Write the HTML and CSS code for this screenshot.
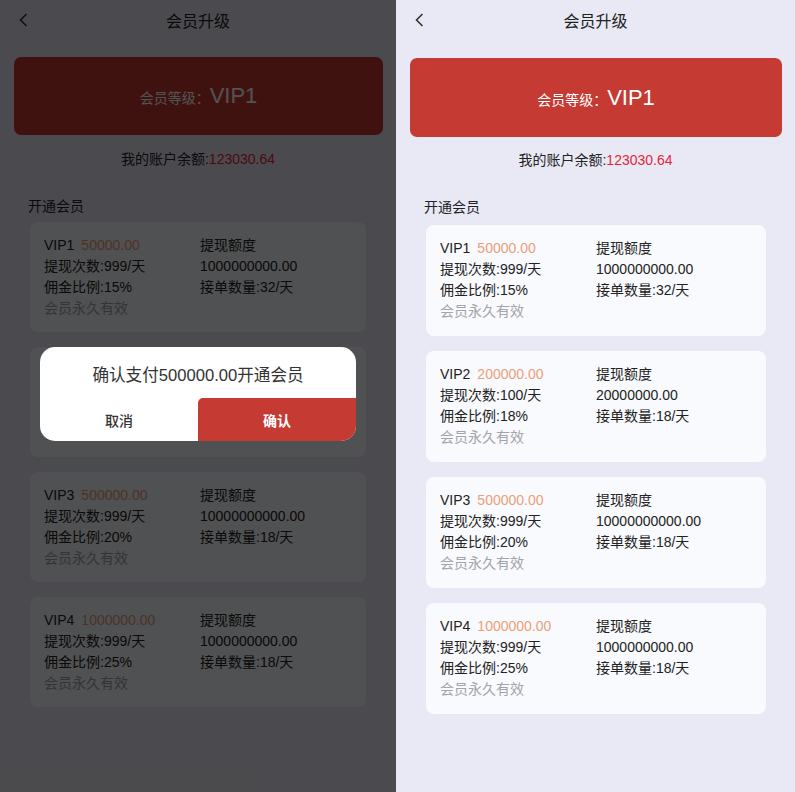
FILE: index.html
```html
<!DOCTYPE html>
<html lang="zh">
<head>
<meta charset="utf-8">
<link rel="stylesheet" href="styles.css">
</head>
<body>
<div class="screen screen-left">
  <div class="header">
    <svg class="back" width="10" height="14" viewBox="0 0 10 14"><polyline points="7.5,1 1.5,7 7.5,13" fill="none" stroke="#333" stroke-width="1.6"/></svg>
    <div class="title">会员升级</div>
  </div>
  <div class="banner"><span class="banner-label">会员等级：</span><span class="banner-level">VIP1</span></div>
  <div class="balance">我的账户余额:<span class="money">123030.64</span></div>
  <div class="section-title">开通会员</div>
  <div class="cards">
    <div class="card">
      <div class="col"><div>VIP1<span class="price">50000.00</span></div><div>提现次数:999/天</div><div>佣金比例:15%</div><div class="muted">会员永久有效</div></div>
      <div class="col"><div>提现额度</div><div>1000000000.00</div><div>接单数量:32/天</div></div>
    </div>
    <div class="card">
      <div class="col"><div>VIP2<span class="price">200000.00</span></div><div>提现次数:100/天</div><div>佣金比例:18%</div><div class="muted">会员永久有效</div></div>
      <div class="col"><div>提现额度</div><div>20000000.00</div><div>接单数量:18/天</div></div>
    </div>
    <div class="card">
      <div class="col"><div>VIP3<span class="price">500000.00</span></div><div>提现次数:999/天</div><div>佣金比例:20%</div><div class="muted">会员永久有效</div></div>
      <div class="col"><div>提现额度</div><div>10000000000.00</div><div>接单数量:18/天</div></div>
    </div>
    <div class="card">
      <div class="col"><div>VIP4<span class="price">1000000.00</span></div><div>提现次数:999/天</div><div>佣金比例:25%</div><div class="muted">会员永久有效</div></div>
      <div class="col"><div>提现额度</div><div>1000000000.00</div><div>接单数量:18/天</div></div>
    </div>
  </div>
  <div class="overlay"></div>
  <div class="modal">
    <div class="modal-text">确认支付500000.00开通会员</div>
    <div class="modal-actions">
      <div class="btn-cancel">取消</div>
      <div class="btn-ok">确认</div>
    </div>
  </div>
</div>
<div class="screen screen-right">
  <div class="header">
    <svg class="back" width="10" height="14" viewBox="0 0 10 14"><polyline points="7.5,1 1.5,7 7.5,13" fill="none" stroke="#333" stroke-width="1.6"/></svg>
    <div class="title">会员升级</div>
  </div>
  <div class="banner"><span class="banner-label">会员等级：</span><span class="banner-level">VIP1</span></div>
  <div class="balance">我的账户余额:<span class="money">123030.64</span></div>
  <div class="section-title">开通会员</div>
  <div class="cards">
    <div class="card">
      <div class="col"><div>VIP1<span class="price">50000.00</span></div><div>提现次数:999/天</div><div>佣金比例:15%</div><div class="muted">会员永久有效</div></div>
      <div class="col"><div>提现额度</div><div>1000000000.00</div><div>接单数量:32/天</div></div>
    </div>
    <div class="card">
      <div class="col"><div>VIP2<span class="price">200000.00</span></div><div>提现次数:100/天</div><div>佣金比例:18%</div><div class="muted">会员永久有效</div></div>
      <div class="col"><div>提现额度</div><div>20000000.00</div><div>接单数量:18/天</div></div>
    </div>
    <div class="card">
      <div class="col"><div>VIP3<span class="price">500000.00</span></div><div>提现次数:999/天</div><div>佣金比例:20%</div><div class="muted">会员永久有效</div></div>
      <div class="col"><div>提现额度</div><div>10000000000.00</div><div>接单数量:18/天</div></div>
    </div>
    <div class="card">
      <div class="col"><div>VIP4<span class="price">1000000.00</span></div><div>提现次数:999/天</div><div>佣金比例:25%</div><div class="muted">会员永久有效</div></div>
      <div class="col"><div>提现额度</div><div>1000000000.00</div><div>接单数量:18/天</div></div>
    </div>
  </div>
</div>
</body>
</html>
```

FILE: styles.css
```css
* { box-sizing: border-box; }
html, body { margin: 0; padding: 0; }
body {
  display: flex;
  width: 795px;
  height: 792px;
  overflow: hidden;
  font-family: "Liberation Sans", "Noto Sans CJK SC", sans-serif;
  color: #222;
  background: #e8e9f4;
}
.screen {
  position: relative;
  height: 792px;
  background: #e8e9f4;
  display: flex;
  flex-direction: column;
}
.screen-left { width: 396px; flex: none; }
.screen-right { width: 399px; flex: none; }

.header {
  position: relative;
  height: 40px;
  display: flex;
  align-items: center;
  justify-content: center;
}
.back { position: absolute; left: 19px; top: 13px; }
.title { font-size: 16px; color: #222; }

.banner {
  margin: 18px 13px 0 14px;
  height: 79px;
  border-radius: 7px;
  background: #c53a33;
  color: #fff;
  display: flex;
  align-items: center;
  justify-content: center;
}
.banner-label { font-size: 14px; margin-top: 2px; }
.banner-level { font-size: 22px; }

.balance {
  margin-top: 12px;
  line-height: 22px;
  text-align: center;
  font-size: 14px;
  color: #222;
}
.money { color: #e5263a; }

.section-title {
  margin: 26px 0 0 28px;
  line-height: 20px;
  font-size: 14px;
  color: #222;
}

.cards {
  margin: 8px 29px 0 30px;
  display: flex;
  flex-direction: column;
  gap: 15px;
}
.card {
  background: #f9fafd;
  border-radius: 8px;
  padding: 13px 14px 14px;
  display: flex;
  font-size: 14px;
  line-height: 21px;
}
.col:first-child { width: 156px; }
.price { color: #e9a07a; margin-left: 7px; }
.muted { color: #a3a3a8; }

/* left screenshot is captured at a very slightly smaller scale */
.screen-left .banner { margin-top: 17px; height: 78px; }
.screen-left .balance { margin-top: 13px; }
.screen-left .section-title { margin-top: 26px; }
.screen-left .cards { margin-top: 6px; margin-right: 30px; }
.screen-left .card { padding-bottom: 13px; }

.overlay {
  position: absolute;
  inset: 0;
  background: rgba(0, 0, 0, 0.68);
}
.modal {
  position: absolute;
  left: 40px;
  top: 347px;
  width: 316px;
  height: 94px;
  background: #fff;
  border-radius: 15px;
  overflow: hidden;
  display: flex;
  flex-direction: column;
}
.modal-text {
  height: 51px;
  padding-top: 2px;
  display: flex;
  align-items: center;
  justify-content: center;
  font-size: 16.6px;
  color: #333;
}
.modal-actions {
  flex: 1;
  display: flex;
}
.btn-cancel, .btn-ok {
  flex: 1;
  display: flex;
  align-items: center;
  justify-content: center;
  font-size: 14px;
}
.btn-cancel { color: #333; font-weight: 500; }
.btn-ok {
  background: #c53a33;
  color: #fff;
  font-weight: bold;
  border-radius: 5px 0 0 0;
}
```
